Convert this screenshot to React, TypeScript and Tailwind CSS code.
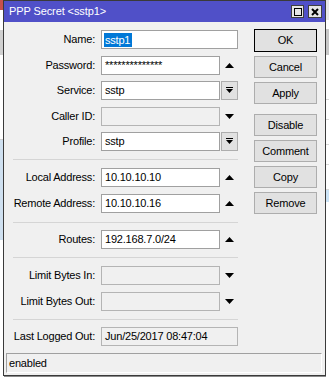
import React from 'react';

const UpArrow = () => (
  <svg width="9" height="5" viewBox="0 0 9 5">
    <path d="M0 5 L4.5 0 L9 5 Z" fill="#000" />
  </svg>
);

const DownArrow = () => (
  <svg width="9" height="5" viewBox="0 0 9 5">
    <path d="M0 0 L9 0 L4.5 5 Z" fill="#000" />
  </svg>
);

const DropIcon = () => (
  <svg width="7" height="7" viewBox="0 0 7 7">
    <rect x="0" y="0" width="7" height="1" fill="#000" />
    <path d="M0 2 L7 2 L3.5 6 Z" fill="#000" />
  </svg>
);

type Kind = 'up' | 'down' | 'drop' | 'none';

function Row({
  label,
  value,
  kind,
  disabled,
  className,
  selected,
}: {
  label: string;
  value?: string;
  kind: Kind;
  disabled?: boolean;
  className: string;
  selected?: boolean;
}) {
  const wide = kind === 'none';
  return (
    <div className={`flex items-center h-[19px] ${className}`}>
      <div className="w-[92px] text-right pr-[1px] whitespace-nowrap">{label}</div>
      <div
        className={`ml-[5px] h-[19px] border flex items-center pl-[2px] whitespace-nowrap overflow-hidden ${
          wide ? 'w-[137px]' : 'w-[119px]'
        } ${disabled ? 'bg-[#f0f0f0] border-[#b4b4b4]' : 'bg-white border-[#a0a0a0]'}`}
      >
        {selected ? (
          <span className="bg-[#0078d7] text-white pl-[1px] pr-[2px] leading-[14px]">{value}</span>
        ) : (
          <span className="pl-[1px]">{value}</span>
        )}
      </div>
      {kind === 'up' && (
        <div className="w-[18px] flex justify-center">
          <UpArrow />
        </div>
      )}
      {kind === 'down' && (
        <div className="w-[18px] flex justify-center">
          <DownArrow />
        </div>
      )}
      {kind === 'drop' && (
        <div className="ml-[1px] w-[17px] h-[19px] bg-[#e1e1e1] border border-[#adadad] flex items-center justify-center">
          <DropIcon />
        </div>
      )}
    </div>
  );
}

const Sep = ({ className }: { className: string }) => (
  <div className={`ml-[9px] w-[225px] h-[1px] bg-[#d5d5d5] ${className}`} />
);

function Btn({ label, className }: { label: string; className: string }) {
  return (
    <div
      className={`w-[63px] flex items-center justify-center bg-[#e1e1e1] border ${className}`}
    >
      {label}
    </div>
  );
}

export default function App() {
  return (
    <div className="w-[329px] h-[378px] flex bg-white overflow-hidden font-['Liberation_Sans',Arial,sans-serif] text-[11px] tracking-[-0.2px] text-black">
      {/* background window, left edge */}
      <div className="w-[3px] h-full flex flex-col bg-[#f7f7f7]">
        <div className="h-[10px] bg-[#c8504a]" />
        <div className="h-[20px] bg-white" />
        <div className="h-[25px] bg-[#d0d0d0]" />
        <div className="h-[85px] bg-white border-b border-[#d0d0d0]" />
        <div className="h-[100px] bg-[#cfe0f0]" />
        <div className="flex-1 bg-white" />
      </div>

      {/* dialog */}
      <div className="w-[323px] h-[376px] flex flex-col border border-[#3a3a3a] shadow-[1px_1px_0_#8a8a8a]">
        <div className="h-[21px] bg-[#5050c8] flex items-center pl-[5px] pr-[3px] text-white">
          <span className="text-[11px] tracking-[-0.1px]">PPP Secret &lt;sstp1&gt;</span>
          <div className="ml-auto flex items-center gap-[4px]">
            <div className="w-[13px] h-[13px] bg-[#e6e6e6] border border-[#404040] flex items-center justify-center">
              <div className="w-[8px] h-[8px] border border-black" />
            </div>
            <div className="w-[14px] h-[13px] bg-[#e6e6e6] border border-[#404040] flex items-center justify-center">
              <svg width="8" height="8" viewBox="0 0 8 8">
                <path d="M1 1 L7 7 M7 1 L1 7" stroke="#000" strokeWidth="2" />
              </svg>
            </div>
          </div>
        </div>

        <div className="flex-1 bg-[#f0f0f0] flex flex-col">
          <div className="flex">
            <div className="w-[234px] flex flex-col pt-[8px]">
              <Row label="Name:" value="sstp1" kind="none" selected className="" />
              <Row label="Password:" value="**************" kind="up" className="mt-[7px]" />
              <Row label="Service:" value="sstp" kind="drop" className="mt-[6px]" />
              <Row label="Caller ID:" kind="down" disabled className="mt-[7px]" />
              <Row label="Profile:" value="sstp" kind="drop" className="mt-[6px]" />
              <Sep className="mt-[8px]" />
              <Row label="Local Address:" value="10.10.10.10" kind="up" className="mt-[8px]" />
              <Row label="Remote Address:" value="10.10.10.16" kind="up" className="mt-[7px]" />
              <Sep className="mt-[9px]" />
              <Row label="Routes:" value="192.168.7.0/24" kind="up" className="mt-[7px]" />
              <Sep className="mt-[8px]" />
              <Row label="Limit Bytes In:" kind="down" disabled className="mt-[8px]" />
              <Row label="Limit Bytes Out:" kind="down" disabled className="mt-[7px]" />
              <Sep className="mt-[8px]" />
              <Row
                label="Last Logged Out:"
                value="Jun/25/2017 08:47:04"
                kind="none"
                disabled
                className="mt-[7px]"
              />
            </div>

            <div className="ml-[16px] flex flex-col pt-[7px]">
              <Btn label="OK" className="h-[23px] border-black" />
              <Btn label="Cancel" className="h-[22px] mt-[4px] border-[#adadad]" />
              <Btn label="Apply" className="h-[22px] mt-[4px] border-[#adadad]" />
              <Btn label="Disable" className="h-[22px] mt-[10px] border-[#adadad]" />
              <Btn label="Comment" className="h-[22px] mt-[4px] border-[#adadad]" />
              <Btn label="Copy" className="h-[22px] mt-[4px] border-[#adadad]" />
              <Btn label="Remove" className="h-[22px] mt-[4px] border-[#adadad]" />
            </div>
          </div>

          <div className="mt-[7px] ml-[2px] mr-[3px] h-[20px] flex items-center pl-[2px] border border-t-[#a0a0a0] border-l-[#a0a0a0] border-b-white border-r-white">
            enabled
          </div>
        </div>
      </div>

      {/* background window, right edge */}
      <div className="flex-1 h-full flex flex-col bg-white">
        <div className="h-[20px] bg-[#e8e8e8]" />
        <div className="h-[10px] border-b border-[#c8c8c8]" />
        <div className="h-[25px] bg-[#c8c8c8]" />
        <div className="h-[45px] border-b border-[#d8d8d8]" />
        <div className="h-[20px] border-b border-[#d8d8d8]" />
        <div className="h-[25px] border-b border-[#d8d8d8]" />
        <div className="h-[20px] border-b border-[#d8d8d8]" />
        <div className="h-[25px] border-b border-[#d8d8d8]" />
        <div className="h-[12px] bg-[#cce4f7]" />
        <div className="flex-1" />
      </div>
    </div>
  );
}
